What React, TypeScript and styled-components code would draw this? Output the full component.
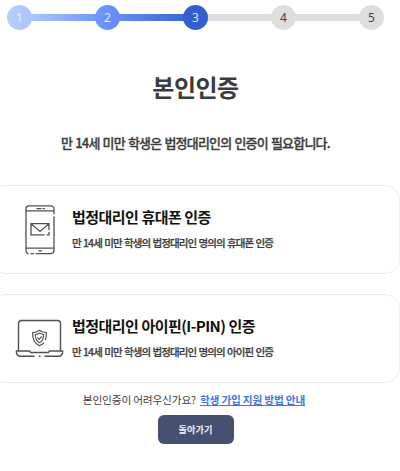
import React from "react";
import styled, { createGlobalStyle } from "styled-components";

const GlobalStyle = createGlobalStyle`
  * { box-sizing: border-box; }
  body {
    margin: 0;
    background: #fff;
    overflow: hidden;
    font-family: "Noto Sans CJK KR", "Noto Sans", sans-serif;
  }
`;

const Page = styled.main`
  width: 400px;
  height: 471px;
  overflow: hidden;
  display: flex;
  flex-direction: column;
  align-items: center;
  color: #3c3c3c;
`;

const Stepper = styled.ol`
  display: flex;
  align-items: center;
  align-self: stretch;
  list-style: none;
  margin: 5px 16px 0 7px;
  padding: 0;
  height: 25px;
`;

const Step = styled.li<{ $fill: string; $ink: string }>`
  position: relative;
  z-index: 1;
  flex: none;
  width: 25px;
  height: 25px;
  border-radius: 50%;
  background: ${(p) => p.$fill};
  color: ${(p) => p.$ink};
  font-family: "Noto Sans", sans-serif;
  font-size: 12px;
  line-height: 25px;
  text-align: center;
`;

const Track = styled.li<{ $fill: string }>`
  flex: 1;
  height: 7px;
  margin: 0 -1px;
  background: ${(p) => p.$fill};
`;

const Title = styled.h1`
  margin: 39px 0 0;
  padding-right: 9px;
  height: 36px;
  font-size: 24px;
  line-height: 36px;
  font-weight: 700;
  letter-spacing: -0.5px;
`;

const Notice = styled.p`
  margin: 28px 0 0;
  padding-right: 9px;
  height: 20px;
  font-size: 13px;
  line-height: 20px;
  font-weight: 500;
  letter-spacing: -0.78px;
  word-spacing: 0.8px;
  -webkit-text-stroke: 0.3px currentColor;
  white-space: nowrap;
`;

const CardList = styled.div`
  align-self: stretch;
  display: flex;
  flex-direction: column;
  gap: 20px;
  margin: 32px 0 0 -10px;
`;

const Card = styled.section`
  display: flex;
  align-items: center;
  height: 89px;
  padding-left: 24px;
  border: 1px solid #ececec;
  border-radius: 15px;
`;

const IconSlot = styled.div`
  flex: none;
  display: flex;
  justify-content: center;
  width: 49px;
  margin-right: 8px;
`;

const CardText = styled.div`
  padding-bottom: 3px;
  white-space: nowrap;
`;

const CardTitle = styled.h2`
  margin: 0;
  color: #111;
  font-size: 15px;
  line-height: 24px;
  font-weight: 700;
  letter-spacing: -0.55px;
  word-spacing: 0.3px;
`;

const CardDescription = styled.p`
  margin: 5px 0 0;
  font-size: 10.5px;
  line-height: 18px;
  font-weight: 500;
  letter-spacing: -0.88px;
  word-spacing: 0.7px;
  -webkit-text-stroke: 0.25px currentColor;
`;

const Help = styled.p`
  display: flex;
  gap: 4px;
  margin: 8px 0 0;
  padding-right: 12px;
  height: 18px;
  font-size: 10.7px;
  line-height: 17px;
  letter-spacing: -0.2px;
  white-space: nowrap;
`;

const HelpLink = styled.a`
  color: #4675e2;
  font-weight: 700;
  text-decoration: underline;
  text-underline-offset: 1px;
`;

const BackButton = styled.button`
  width: 76px;
  height: 29px;
  margin: 6px 9px 0 0;
  padding: 0;
  border: 0;
  border-radius: 6px;
  background: #465172;
  color: #f5f6fa;
  font: 500 9.2px/29px "Noto Sans CJK KR", sans-serif;
  -webkit-text-stroke: 0.2px currentColor;
`;

const PhoneIcon = () => (
  <svg width="30" height="50" viewBox="0 0 30 51" preserveAspectRatio="none" fill="none" stroke="#505050" strokeWidth="1.3" strokeLinecap="round">
    <path d="M29 9V4a3 3 0 0 0-3-3H4a3 3 0 0 0-3 3v42.5a3 3 0 0 0 2 3M6 49.5h2.5M11 49.5h15a3 3 0 0 0 3-3V12" />
    <path d="M1.5 6h27M1.5 44h27M12 3.6h4M18 3.6h1.5M14 46.8h2.5" />
    <path d="M24 25v-6H6v11.500h13M22 30.500h2V28M6.500 19.500 15 27l8.500-7.500" />
  </svg>
);

const LaptopIcon = () => (
  <svg width="49" height="39" viewBox="0 0 49 39" fill="none" stroke="#505050" strokeWidth="1.4" strokeLinecap="round" strokeLinejoin="round">
    <path d="M3.500 31.500V4.500a3 3 0 0 1 3-3h36a3 3 0 0 1 3 3v27" />
    <path d="M19 37.300H6c-3 0-4.700-1.500-4.700-5.300h13.200l1.200 1.500h17.600l1.200-1.500h13.200c0 3.800-1.700 5.300-4.700 5.300H30M24.500 37.300h.6" />
    <path d="M30.500 20.500c.7-2 1-4 .9-7-2.500 0-4.900-.8-6.900-2.300-2 1.500-4.400 2.300-6.900 2.300-.2 6.800 1.600 11 6.900 13.200 1.700-.7 3-1.600 4-2.700" strokeWidth="1.200" />
    <path d="M24.500 14c-1.300.9-2.700 1.400-4.200 1.600 0 4 1 6.500 4.200 8.200 3.200-1.700 4.200-4.200 4.200-8.200-1.500-.2-2.900-.7-4.200-1.600ZM22.700 18.900l1.400 1.500 2.600-2.800" strokeWidth="1.100" />
  </svg>
);

const methods = [
  {
    icon: <PhoneIcon />,
    title: "법정대리인 휴대폰 인증",
    description: "만 14세 미만 학생의 법정대리인 명의의 휴대폰 인증",
  },
  {
    icon: <LaptopIcon />,
    title: "법정대리인 아이핀(I-PIN) 인증",
    description: "만 14세 미만 학생의 법정대리인 명의의 아이핀 인증",
  },
];

export default function App() {
  return (
    <>
      <GlobalStyle />
      <Page>
        <Stepper>
          <Step $fill="linear-gradient(90deg, #b4cfff, #a9c6ff)" $ink="#edf3ff">1</Step>
          <Track $fill="linear-gradient(90deg, #a9c6ff, #7197fb)" />
          <Step $fill="linear-gradient(90deg, #7399ff, #6289f5)" $ink="#e4ebff">2</Step>
          <Track $fill="linear-gradient(90deg, #658bf3, #3c68d8)" />
          <Step $fill="#345fd1" $ink="#dde6ff">3</Step>
          <Track $fill="#dedede" />
          <Step $fill="#dedede" $ink="#444">4</Step>
          <Track $fill="#dedede" />
          <Step $fill="#dedede" $ink="#444">5</Step>
        </Stepper>
        <Title>본인인증</Title>
        <Notice>만 14세 미만 학생은 법정대리인의 인증이 필요합니다.</Notice>
        <CardList>
          {methods.map((m) => (
            <Card key={m.title}>
              <IconSlot>{m.icon}</IconSlot>
              <CardText>
                <CardTitle>{m.title}</CardTitle>
                <CardDescription>{m.description}</CardDescription>
              </CardText>
            </Card>
          ))}
        </CardList>
        <Help>
          본인인증이 어려우신가요?
          <HelpLink href="#">학생 가입 지원 방법 안내</HelpLink>
        </Help>
        <BackButton type="button">돌아가기</BackButton>
      </Page>
    </>
  );
}
